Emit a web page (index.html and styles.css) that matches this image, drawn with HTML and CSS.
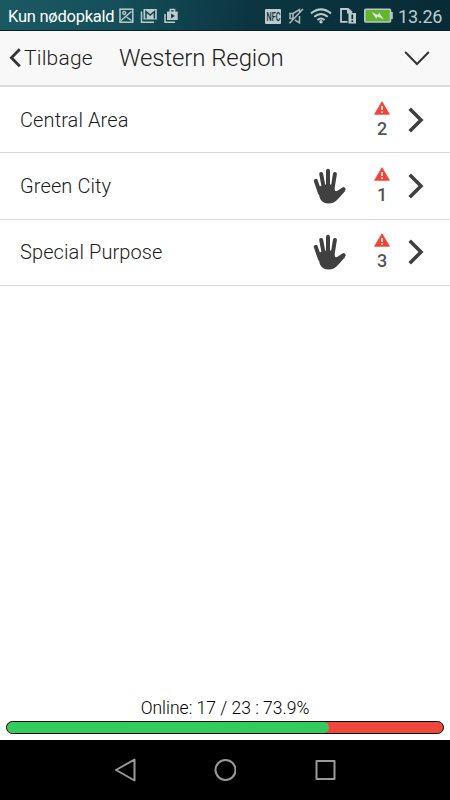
FILE: index.html
```
<!DOCTYPE html>
<html lang="da">
<head>
  <meta charset="UTF-8" />
  <meta name="viewport" content="width=device-width, initial-scale=1.0" />
  <title>Western Region</title>
  <link rel="stylesheet" href="styles.css">
</head>
<body>
  <svg class="defs" width="0" height="0">
    <symbol id="hand" viewBox="0 0 34 36">
      <g fill="none" stroke="#404040" stroke-width="4" stroke-linecap="round">
        <path d="M2.800 12.800 L7 25" />
        <path d="M8.200 6 L11 21" />
        <path d="M15 2.800 V21" />
        <path d="M21.900 6 L19.500 21" />
        <path d="M30.600 21.200 L23 29" />
      </g>
      <path d="M5 19 L9.500 17.500 L13 16.500 L20.800 16.500 L21.600 21.800 Q22.200 23.800 24.500 22.800 L29 19.800 L32.200 23 L25 31 Q21 35.500 15.500 35.500 Q9.500 35.500 7 30.500 Q5.800 27 5 19 Z" fill="#404040" />
    </symbol>
    <symbol id="alert" viewBox="0 0 16 14">
      <path d="M8 .7 L15.400 13.300 H.6 Z" fill="#f44336" stroke="#f44336" stroke-width=".8" stroke-linejoin="round" />
      <path d="M8 5 V9 M8 10.300 V12" stroke="#fff" stroke-width="1.600" />
    </symbol>
    <symbol id="next" viewBox="0 0 16 26">
      <path d="M1.700 1.700 L13 13 L1.700 24.300" fill="none" stroke="#404040" stroke-width="3.600" />
    </symbol>
  </svg>

  <div class="status-bar">
    <span class="carrier">Kun nødopkald</span>
    <svg class="notifications" width="60" height="16" viewBox="0 0 60 16" fill="none" stroke="#bccbcd" stroke-width="1.500">
      <rect x="1" y="1.200" width="12.800" height="13" />
      <circle cx="5.200" cy="5" r="1.500" stroke-width="1.300" />
      <path d="M2 12.500 L12.500 3.500 M7.500 9 L12.500 12.500" />
      <path d="M22.500 3.500 V14.300 H35" />
      <rect x="24.500" y="1" width="13.300" height="10.500" fill="#bccbcd" stroke="none" />
      <path d="M27 10.500 V3.500 L31.200 7 L35.400 3.500 V10.500" stroke="#11414b" />
      <path d="M46 6 V14.300 H56" />
      <rect x="48" y="3.500" width="10.700" height="8.500" fill="#bccbcd" stroke="none" />
      <path d="M51.300 4 V1.500 H55.500 V4" />
      <path d="M52 5.500 V10.500 L56 8 Z" fill="#11414b" stroke="none" />
    </svg>
    <div class="system">
      <span class="nfc"><span>NFC</span></span>
      <svg class="mute" width="16" height="16" viewBox="0 0 16 16" fill="none" stroke="#a9b9bc" stroke-width="1.500">
        <path d="M5 10.500 H2 V5.500 H5 L11.500 1.500 V5 M7 12 L11.500 14.800 V8 M15 1 L1.500 15.300 M5 5.500 V10" />
      </svg>
      <svg class="wifi" width="22" height="16" viewBox="0 0 22 16" fill="none" stroke="#bccbcd" stroke-width="2">
        <path d="M1 5.400 Q11 -2.600 21 5.400 M4.300 8.800 Q11 3.200 17.700 8.800 M7.400 12 Q11 9 14.600 12" />
        <circle cx="11" cy="13.700" r="1.700" fill="#bccbcd" stroke="none" />
      </svg>
      <svg class="sim" width="17" height="16" viewBox="0 0 17 16">
        <path d="M7.500 13.800 H1 V1 H8 L12 4.500" fill="none" stroke="#bccbcd" stroke-width="1.800" />
        <path d="M7 1 L12.500 5.500 H7 Z" fill="#bccbcd" />
        <rect x="8.500" y="5" width="7.500" height="10.500" fill="#bccbcd" />
        <path d="M12.300 6.500 V11 M12.300 12.300 V14" stroke="#092d37" stroke-width="1.700" />
      </svg>
      <svg class="battery" width="30" height="16" viewBox="0 0 30 16">
        <rect x=".8" y="1.200" width="25.700" height="12.800" rx="1" fill="#66b32e" stroke="#b8c8ca" stroke-width="1.600" />
        <rect x="27" y="4" width="1.800" height="7" fill="#b8c8ca" />
        <path d="M7.500 4 L14 7 L15 4.500 L20 11.500 L13.500 8.500 L12.300 10.800 Z" fill="#d9e8d5" />
      </svg>
      <span class="clock">13.26</span>
    </div>
  </div>

  <header class="header">
    <a class="back">
      <svg width="12" height="20" viewBox="0 0 12 20" fill="none" stroke="#333" stroke-width="2.800">
        <path d="M10.800 1.300 L2.400 9.800 L10.800 18.300" />
      </svg>
      <span>Tilbage</span>
    </a>
    <h1>Western Region</h1>
    <svg class="dropdown" width="26" height="16" viewBox="0 0 26 16" fill="none" stroke="#333" stroke-width="2">
      <path d="M1.200 2 L13 14 L24.800 2" />
    </svg>
  </header>

  <main class="list">
    <div class="row">
      <span class="name">Central Area</span>
      <div class="alerts">
        <svg width="16" height="14"><use href="#alert" /></svg>
        <span>2</span>
      </div>
      <svg class="next" width="16" height="26"><use href="#next" /></svg>
    </div>
    <div class="row">
      <span class="name">Green City</span>
      <svg class="hand" width="34" height="36"><use href="#hand" /></svg>
      <div class="alerts">
        <svg width="16" height="14"><use href="#alert" /></svg>
        <span>1</span>
      </div>
      <svg class="next" width="16" height="26"><use href="#next" /></svg>
    </div>
    <div class="row">
      <span class="name">Special Purpose</span>
      <svg class="hand" width="34" height="36"><use href="#hand" /></svg>
      <div class="alerts">
        <svg width="16" height="14"><use href="#alert" /></svg>
        <span>3</span>
      </div>
      <svg class="next" width="16" height="26"><use href="#next" /></svg>
    </div>
  </main>

  <footer class="online">
    <div class="online-text">Online: 17 / 23 : 73.9%</div>
    <div class="bar"><div class="bar-fill" style="width: 73.9%"></div></div>
  </footer>

  <nav class="nav-bar">
    <svg width="22" height="24" viewBox="0 0 22 24"><path d="M20.500 1.500 V22.500 L2 12 Z" /></svg>
    <svg width="22" height="24" viewBox="0 0 22 24"><circle cx="11.500" cy="12" r="10" /></svg>
    <svg width="22" height="24" viewBox="0 0 22 24"><rect x="2.500" y="3" width="18" height="18" /></svg>
  </nav>
</body>
</html>
```
FILE: styles.css
```
:root {
  --text: #1c1c1c;
  --icon: #bccbcd;
  --line: #dcdcdc;
  --green: #33cd5f;
  --red: #ef473a;
}

* {
  box-sizing: border-box;
}

body {
  margin: 0;
  height: 800px;
  display: flex;
  flex-direction: column;
  font-family: Roboto, sans-serif;
  color: var(--text);
  background: #fff;
  overflow: hidden;
}

svg {
  display: block;
  flex: none;
}

.defs {
  position: absolute;
}

.status-bar {
  height: 31px;
  flex: none;
  display: flex;
  align-items: center;
  padding: 2px 8px 0;
  color: #fff;
  background: linear-gradient(100deg, #1b5962 0%, #15505a 25%, #0b3641 55%, #082b35 100%);
  border-bottom: 1px solid #06202e;
}

.carrier {
  width: 111px;
  font-size: 16.5px;
  letter-spacing: -0.25px;
  line-height: 28px;
  padding-top: 2px;
  white-space: nowrap;
}

.system {
  display: flex;
  align-items: center;
  margin-left: auto;
  color: var(--icon);
}

.nfc {
  width: 16px;
  height: 15px;
  display: flex;
  align-items: center;
  justify-content: center;
  border-radius: 1px;
  background: var(--icon);
  color: #092d37;
  font-size: 13px;
  font-weight: 500;
  line-height: 15px;
}

.nfc span {
  transform: scaleX(0.56);
}

.mute {
  margin-left: 7px;
}

.wifi {
  margin-left: 6px;
}

.sim {
  margin-left: 8px;
}

.battery {
  margin-left: 7px;
}

.clock {
  width: 44px;
  margin-left: 4px;
  font-size: 18px;
  letter-spacing: -0.2px;
  line-height: 28px;
  padding-top: 2px;
}

.header {
  height: 56px;
  flex: none;
  display: flex;
  align-items: center;
  padding: 0 20px 0 9px;
  background: #f8f8f8;
  border-bottom: 2px solid var(--line);
}

.back {
  width: 110px;
  display: flex;
  align-items: center;
  gap: 3px;
  font-size: 21px;
  font-weight: 350;
  letter-spacing: 0.2px;
}

h1 {
  margin: 0;
  font-size: 24px;
  font-weight: 350;
  letter-spacing: -0.1px;
}

.dropdown {
  margin-left: auto;
}

.row {
  height: 66.3px;
  display: flex;
  align-items: center;
  padding: 0.4px 26px 0 20px;
  border-bottom: 1px solid #d8d8d8;
}

.name {
  flex: 1;
  font-size: 20px;
  font-weight: 350;
  letter-spacing: 0.1px;
}

.hand {
  margin-right: 27px;
}

.alerts {
  width: 16px;
  display: flex;
  flex-direction: column;
  align-items: center;
  margin-right: 18px;
  color: #555;
  font-size: 18px;
  font-weight: 500;
  line-height: 20px;
}

.alerts svg {
  margin-bottom: 4px;
}

.online {
  margin-top: auto;
  padding: 0 6px 6px;
}

.online-text {
  text-align: center;
  font-size: 17.5px;
  font-weight: 350;
  line-height: 20px;
  margin-bottom: 3px;
  color: #000;
}

.bar {
  height: 13px;
  border: 1px solid #000;
  border-radius: 7px;
  background: var(--red);
  overflow: hidden;
}

.bar-fill {
  height: 100%;
  background: var(--green);
  border-radius: 6px;
}

.nav-bar {
  height: 60px;
  flex: none;
  display: flex;
  align-items: center;
  justify-content: center;
  gap: 78px;
  background: #000;
}

.nav-bar svg {
  fill: none;
  stroke: #999;
  stroke-width: 2;
  stroke-linejoin: round;
}
```
